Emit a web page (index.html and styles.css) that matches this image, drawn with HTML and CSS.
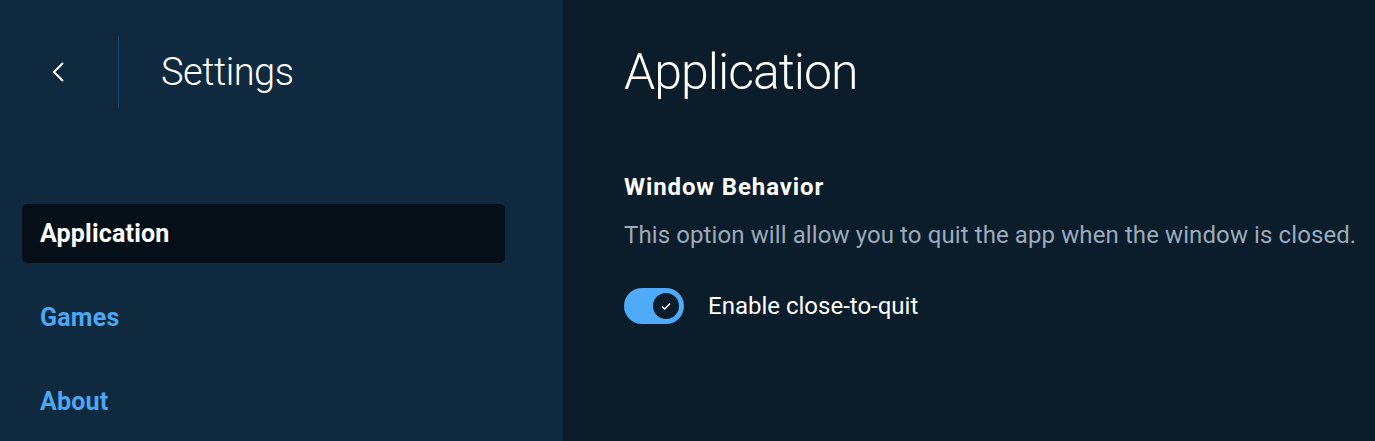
FILE: index.html
```html
<!DOCTYPE html>
<html lang="en">
<head>
    <meta charset="UTF-8">
    <meta name="viewport" content="width=device-width, initial-scale=1.0">
    <title>Settings</title>
    <link rel="stylesheet" href="styles.css">
</head>
<body>

<div class="layout">
    <aside class="sidebar">
        <div class="sidebar-header">
            <button class="back-btn" aria-label="Back">
                <svg width="16" height="22" viewBox="0 0 16 22">
                    <path d="M13 2 L4 11 L13 20" fill="none" stroke="#ffffff" stroke-width="2"/>
                </svg>
            </button>
            <div class="divider"></div>
            <h1>Settings</h1>
        </div>
        <nav class="nav">
            <a class="nav-item active" href="#">Application</a>
            <a class="nav-item" href="#">Games</a>
            <a class="nav-item" href="#">About</a>
        </nav>
    </aside>

    <main class="content">
        <h2>Application</h2>
        <section class="section">
            <h3>Window Behavior</h3>
            <p class="desc">This option will allow you to quit the app when the window is closed.</p>
            <label class="toggle-row">
                <span class="toggle">
                    <span class="knob">
                        <svg width="12" height="10" viewBox="0 0 12 10">
                            <path d="M2 5.5 L4.8 8 L10 2.5" fill="none" stroke="#ffffff" stroke-width="1.5"/>
                        </svg>
                    </span>
                </span>
                <span class="toggle-label">Enable close-to-quit</span>
            </label>
        </section>
    </main>
</div>

</body>
</html>
```

FILE: styles.css
```css
body {
    margin: 0;
    font-family: Roboto, sans-serif;
    background-color: #0b1c2a;
    color: #ffffff;
}

.layout {
    display: flex;
    height: 441px;
}

.sidebar {
    width: 563px;
    background-color: #0f2a3e;
    padding: 0 58px 0 22px;
    box-sizing: border-box;
}

.sidebar-header {
    display: flex;
    align-items: center;
    height: 72px;
    margin-top: 36px;
}

.back-btn {
    background: none;
    border: none;
    padding: 0;
    width: 72px;
    height: 72px;
    margin-right: 24px;
    display: flex;
    align-items: center;
    justify-content: center;
    cursor: pointer;
}

.divider {
    width: 1px;
    height: 72px;
    background-color: #1d4766;
}

.sidebar-header h1 {
    margin: 0 0 0 42px;
    font-size: 38px;
    font-weight: 300;
    letter-spacing: -0.5px;
}

.nav {
    display: flex;
    flex-direction: column;
    gap: 25px;
    margin-top: 96px;
}

.nav-item {
    display: flex;
    align-items: center;
    height: 59px;
    padding: 0 18px;
    border-radius: 5px;
    color: #4ca7f5;
    font-size: 25px;
    font-weight: 700;
    text-decoration: none;
    letter-spacing: 0.2px;
}

.nav-item.active {
    background-color: #040f18;
    color: #ffffff;
}

.content {
    flex: 1;
    padding: 40px 0 0 61px;
}

.content h2 {
    margin: 0;
    font-size: 50px;
    font-weight: 300;
    letter-spacing: -1px;
    line-height: 64px;
}

.section {
    margin-top: 68px;
}

.section h3 {
    margin: 0;
    font-size: 24px;
    font-weight: 700;
    line-height: 30px;
    letter-spacing: 0.9px;
}

.desc {
    margin: 18px 0 0;
    font-size: 24px;
    color: #9aabbc;
    line-height: 30px;
    letter-spacing: 0.1px;
}

.toggle-row {
    display: flex;
    align-items: center;
    margin-top: 38px;
    cursor: pointer;
}

.toggle {
    width: 60px;
    height: 36px;
    border-radius: 18px;
    background-color: #4dabf7;
    display: flex;
    align-items: center;
    justify-content: flex-end;
    padding: 0 5px;
    box-sizing: border-box;
}

.knob {
    width: 26px;
    height: 26px;
    border-radius: 50%;
    background-color: #0b1c2a;
    display: flex;
    align-items: center;
    justify-content: center;
}

.toggle-label {
    margin-left: 24px;
    font-size: 24px;
}
```
